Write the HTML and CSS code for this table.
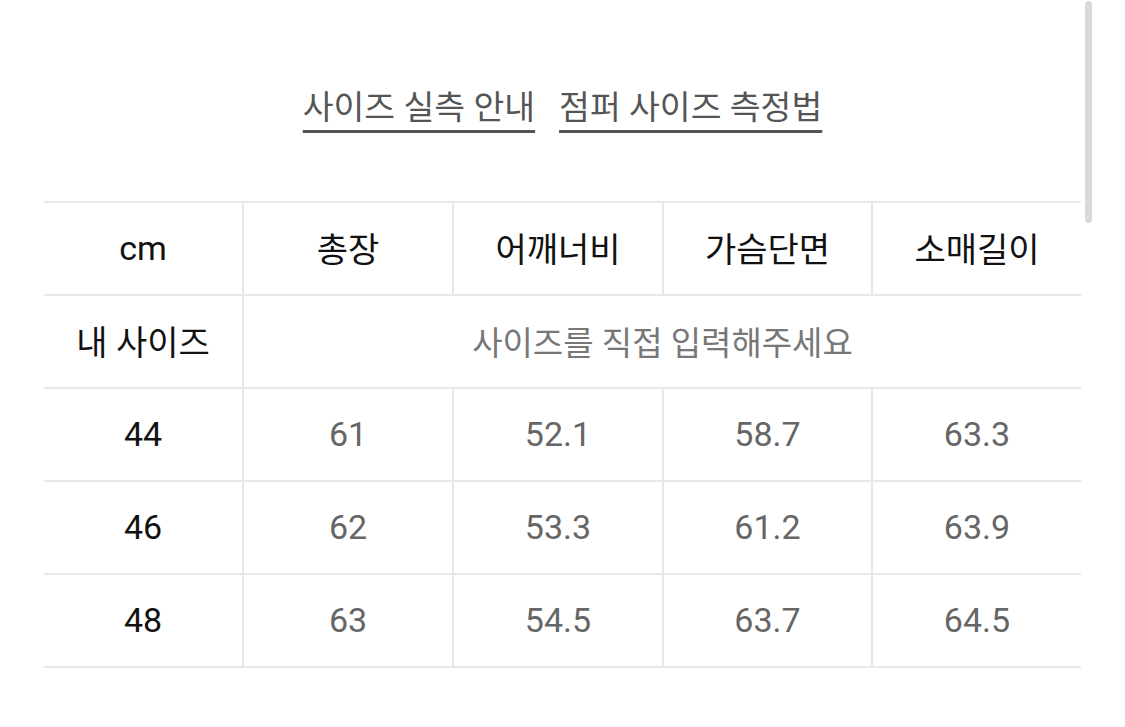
FILE: index.html
```html
<!DOCTYPE html>
<html lang="ko">
<head>
<meta charset="utf-8">
<link rel="stylesheet" href="styles.css">
</head>
<body>
<div class="page">
  <div class="links">
    <a class="link" href="#">사이즈 실측 안내</a>
    <a class="link" href="#">점퍼 사이즈 측정법</a>
  </div>
  <div class="table">
    <div class="row head">
      <div class="cell first">cm</div>
      <div class="cell">총장</div>
      <div class="cell">어깨너비</div>
      <div class="cell">가슴단면</div>
      <div class="cell">소매길이</div>
    </div>
    <div class="row">
      <div class="cell first">내 사이즈</div>
      <div class="cell span hint">사이즈를 직접 입력해주세요</div>
    </div>
    <div class="row">
      <div class="cell first">44</div>
      <div class="cell val">61</div>
      <div class="cell val">52.1</div>
      <div class="cell val">58.7</div>
      <div class="cell val">63.3</div>
    </div>
    <div class="row">
      <div class="cell first">46</div>
      <div class="cell val">62</div>
      <div class="cell val">53.3</div>
      <div class="cell val">61.2</div>
      <div class="cell val">63.9</div>
    </div>
    <div class="row">
      <div class="cell first">48</div>
      <div class="cell val">63</div>
      <div class="cell val">54.5</div>
      <div class="cell val">63.7</div>
      <div class="cell val">64.5</div>
    </div>
  </div>
</div>
<div class="scrollbar"></div>
</body>
</html>
```

FILE: styles.css
```css
html, body {
  margin: 0;
  padding: 0;
  background: #ffffff;
}
body {
  font-family: Roboto, "Noto Sans CJK KR", sans-serif;
  color: #111;
  width: 1125px;
  height: 727px;
  overflow: hidden;
}
.page {
  padding: 0 44px;
}
.links {
  height: 201px;
  display: flex;
  justify-content: center;
  align-items: flex-start;
  gap: 24px;
  box-sizing: border-box;
  padding-top: 86px;
}
.link {
  font-size: 33.5px;
  color: #555;
  text-decoration: underline;
  text-decoration-thickness: 3px;
  text-underline-offset: 11px;
  line-height: 44px;
}
.table {
  border-top: 2px solid #e8e8e8;
}
.row {
  display: grid;
  grid-template-columns: 198px 210px 210px 209px 210px;
  border-bottom: 2px solid #e8e8e8;
  height: 91px;
}
.cell {
  display: flex;
  align-items: center;
  justify-content: center;
  font-size: 34px;
  border-left: 2px solid #e8e8e8;
  padding-bottom: 2px;
}
.cell.first {
  border-left: none;
  color: #111;
}
.head .cell {
  color: #111;
}
.cell.span {
  grid-column: 2 / 6;
}
.hint {
  color: #777;
  font-size: 33px;
}
.val {
  color: #666;
}
.scrollbar {
  position: absolute;
  left: 1085px;
  top: 1px;
  width: 7px;
  height: 222px;
  border-radius: 4px;
  background: #d9d9d9;
}
```
